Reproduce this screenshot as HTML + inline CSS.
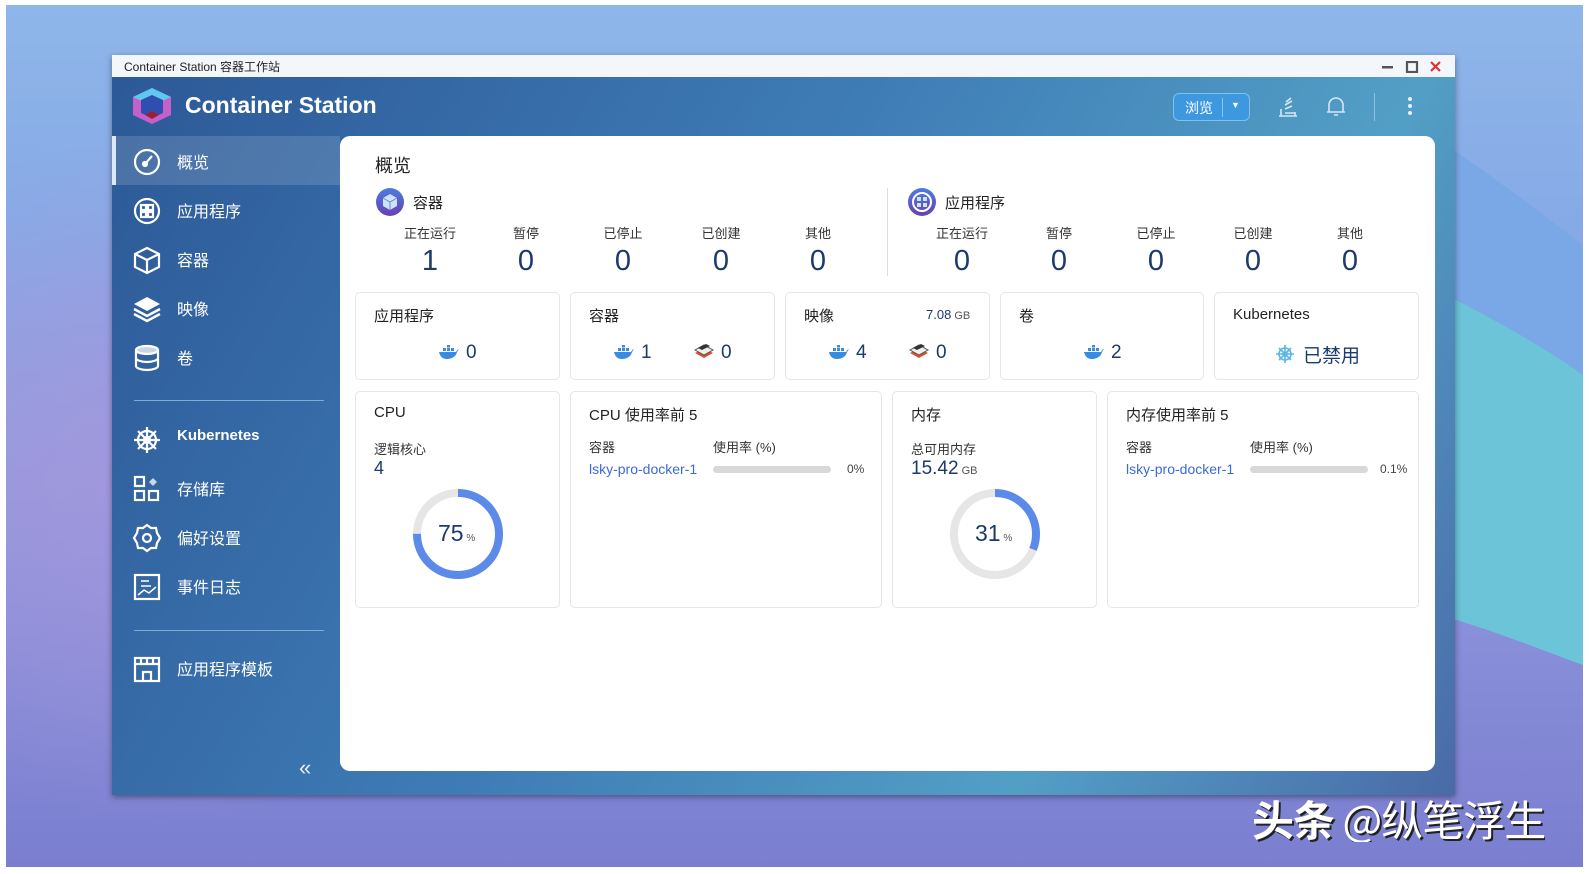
<!DOCTYPE html>
<html><head><meta charset="utf-8"><style>
*{margin:0;padding:0;box-sizing:border-box}
html{width:1589px;height:874px;overflow:hidden}
body{width:1589px;height:874px;overflow:hidden;background:#fff;font-family:"Liberation Sans","Noto Sans CJK SC",sans-serif;position:relative}
.a{position:absolute}
.wall{left:6px;top:5px;width:1577px;height:862px;background:linear-gradient(180deg,#8fb6ea 0%,#86aae6 25%,#929ade 55%,#7b7ed0 100%);overflow:hidden}
.win{left:112px;top:55px;width:1343px;height:740px;box-shadow:0 2px 6px rgba(0,0,0,.4);background:linear-gradient(120deg,#2c5896 0%,#3f7db6 45%,#529fc6 75%,#4a6aa8 100%)}
.tb{left:0;top:0;width:1343px;height:22px;background:#f3f6fb;font-size:12px;color:#222;padding:3px 12px}
.side{color:#fff;font-size:16px}
.mi{left:0;width:228px;height:49px}
.mi span{position:absolute;left:65px;top:13px}
.mi svg{position:absolute;left:20px;top:11px}
.card{background:#fff;border:1px solid #e3e6ea;border-radius:5px}
.t{font-size:15px;color:#222}
.lab{font-size:13px;color:#333;width:100px;text-align:center}
.num{font-size:29px;color:#1b3a6e;width:100px;text-align:center;line-height:34px}
.n2{font-size:19px;color:#1b3a6e}
</style></head><body>
<div class="a wall">
<div class="a" style="left:-200px;top:120px;width:700px;height:700px;border-radius:50%;background:radial-gradient(closest-side,rgba(170,150,220,.7),rgba(170,150,220,0))"></div>
<svg class="a" style="left:0;top:0" width="1577" height="862"><path d="M1440 290 C1500 320 1550 350 1577 370 L1577 660 C1510 635 1470 620 1440 612Z" fill="#6cc4d8"/><path d="M1440 140 C1500 180 1550 220 1577 240 L1577 370 C1550 350 1500 320 1440 290Z" fill="#7aa8e6"/></svg>
</div>
<div class="a win">
<div class="a tb">Container Station 容器工作站</div>
<svg class="a" style="left:1268px;top:6px" width="70" height="12"><rect x="2" y="5" width="11" height="2.5" fill="#555"/><rect x="27" y="1" width="10" height="10" fill="none" stroke="#555" stroke-width="2.2"/><path d="M51 1l9 9M60 1l-9 9" stroke="#d33" stroke-width="2.2"/></svg>
<svg class="a" style="left:19px;top:31px" width="42" height="40"><path d="M21 2L40 11V29L21 38L2 29V11Z" fill="#c65fc9"/><path d="M21 2L40 11L21 20L2 11Z" fill="#5ec8ef"/><path d="M10 14L21 9L32 14V27L21 32L10 27Z" fill="#2e4fb0"/><path d="M14 29L21 25L28 29L21 33Z" fill="#9b2030"/></svg>
<div class="a" style="left:73px;top:37px;font-size:23px;font-weight:bold;color:#fff">Container Station</div>
<div class="a" style="left:1061px;top:38px;width:77px;height:28px;border:1px solid #7fc0f0;border-radius:6px;background:#3e98e0;color:#fff;font-size:14px;padding:4px 11px">浏览<span class="a" style="left:48px;top:4px;width:1px;height:19px;background:#8cc6f0"></span><span class="a" style="left:57px;top:6px;font-size:9px">▼</span></div>
<svg class="a" style="left:1164px;top:40px" width="24" height="24" fill="none" stroke="#d6e6f3" stroke-width="1.6"><path d="M3 21H21M5 21V14M19 21V17M9 18H19M9 14L16 11M9 10L16 6M10 7L15 3"/></svg>
<svg class="a" style="left:1212px;top:40px" width="24" height="24" fill="none" stroke="#d6e6f3" stroke-width="1.6"><path d="M5 17V10a7 7 0 0 1 14 0v7H5zM3 17H21M10 20h4"/></svg>
<div class="a" style="left:1262px;top:38px;width:1px;height:28px;background:#8fc0df"></div>
<svg class="a" style="left:1295px;top:41px" width="6" height="22" fill="#e6eef6"><circle cx="3" cy="3" r="2"/><circle cx="3" cy="10" r="2"/><circle cx="3" cy="17" r="2"/></svg>
<div class="side">
<div class="a mi" style="top:81px;background:rgba(255,255,255,.14)"><div class="a" style="left:0;top:0;width:4px;height:49px;background:#dde8f5"></div><svg width="30" height="30" fill="none" stroke="#fff" stroke-width="2.2"><circle cx="15" cy="15" r="12"/><path d="M13 17L20 9"/><circle cx="13" cy="17" r="2" fill="#fff"/></svg><span>概览</span></div>
<div class="a mi" style="top:130px"><svg width="30" height="30" fill="none" stroke="#fff" stroke-width="2.2"><circle cx="15" cy="15" r="12"/><rect x="9" y="9" width="5" height="5"/><rect x="16" y="9" width="5" height="5"/><rect x="9" y="16" width="5" height="5"/><rect x="16" y="16" width="5" height="5"/></svg><span>应用程序</span></div>
<div class="a mi" style="top:179px"><svg width="30" height="30" fill="none" stroke="#fff" stroke-width="2.2"><path d="M15 3L27 9V22L15 28L3 22V9Z M3 9L15 15L27 9M15 15V28"/></svg><span>容器</span></div>
<div class="a mi" style="top:228px"><svg width="30" height="30" fill="#fff"><path d="M15 3L28 10L15 17L2 10Z"/><path d="M2 15L15 22L28 15" fill="none" stroke="#fff" stroke-width="2.5"/><path d="M2 20L15 27L28 20" fill="none" stroke="#fff" stroke-width="2.5"/></svg><span>映像</span></div>
<div class="a mi" style="top:277px"><svg width="30" height="30" fill="none" stroke="#fff" stroke-width="2.2"><ellipse cx="15" cy="7" rx="11" ry="4" fill="#c9d6e6"/><path d="M4 7V23c0 2 5 4 11 4s11-2 11-4V7M4 15c0 2 5 4 11 4s11-2 11-4"/></svg><span>卷</span></div>
<div class="a" style="left:22px;top:345px;width:190px;height:1px;background:#7faed4"></div>
<div class="a mi" style="top:359px"><svg width="30" height="30" fill="none" stroke="#fff" stroke-width="2.2"><circle cx="15" cy="15" r="9"/><circle cx="15" cy="15" r="3" fill="#fff"/><path d="M15 2V28M2 15H28M6 6L24 24M24 6L6 24"/></svg><span style="font-weight:bold;font-size:15px">Kubernetes</span></div>
<div class="a mi" style="top:408px"><svg width="30" height="30" fill="none" stroke="#fff" stroke-width="2.2"><rect x="3" y="3" width="9" height="9"/><rect x="3" y="17" width="9" height="9"/><rect x="17" y="17" width="9" height="9"/><path d="M17 8l4-4 4 4-4 4z" fill="#c9d6e6" stroke="none"/></svg><span>存储库</span></div>
<div class="a mi" style="top:457px"><svg width="30" height="30" fill="none" stroke="#fff" stroke-width="2.2"><path d="M15 2l4 3 5 0 1 5 3 5-3 5-1 5-5 0-4 3-4-3-5 0-1-5-3-5 3-5 1-5 5 0z"/><circle cx="15" cy="15" r="4"/></svg><span>偏好设置</span></div>
<div class="a mi" style="top:506px"><svg width="30" height="30" fill="none" stroke="#fff" stroke-width="2.2"><rect x="3" y="3" width="24" height="24"/><path d="M9 9h8M9 14h10M6 23l6-5 5 3 7-6" stroke-width="1.5"/></svg><span>事件日志</span></div>
<div class="a" style="left:22px;top:575px;width:190px;height:1px;background:#7faed4"></div>
<div class="a mi" style="top:588px"><svg width="30" height="30" fill="none" stroke="#fff" stroke-width="2.2"><rect x="3" y="4" width="24" height="23"/><path d="M3 10h24M9 4v7M15 4v7M21 4v7M11 27v-9h8v9"/></svg><span>应用程序模板</span></div>
<div class="a" style="left:187px;top:700px;font-size:22px;line-height:26px;color:#e6eef6">«</div>
</div>
<div class="a" style="left:228px;top:81px;width:1095px;height:635px;background:#fff;border-radius:10px"></div>
</div>
<div class="a" style="left:375px;top:152px;font-size:18px;color:#222">概览</div>
<svg class="a" style="left:375px;top:187px" width="30" height="30"><defs><linearGradient id="g" x1="0" y1="0" x2="0" y2="1"><stop offset="0" stop-color="#4a7ee0"/><stop offset="1" stop-color="#6a3fb0"/></linearGradient></defs><circle cx="15" cy="15" r="14" fill="url(#g)"/><path d="M15 7l7 4v8l-7 4-7-4v-8z" fill="#cfe3ff"/><path d="M8 11l7 4 7-4M15 15v8" stroke="#6a8ad0" fill="none"/></svg>
<div class="a t" style="left:413px;top:192px">容器</div>
<svg class="a" style="left:907px;top:187px" width="30" height="30"><circle cx="15" cy="15" r="14" fill="url(#g)"/><circle cx="15" cy="15" r="9" fill="none" stroke="#fff" stroke-width="2"/><rect x="10" y="10" width="4" height="4" fill="#cfe3ff"/><rect x="16" y="10" width="4" height="4" fill="#cfe3ff"/><rect x="10" y="16" width="4" height="4" fill="#cfe3ff"/><rect x="16" y="16" width="4" height="4" fill="#cfe3ff"/></svg>
<div class="a t" style="left:945px;top:192px">应用程序</div>
<div class="a" style="left:887px;top:188px;width:1px;height:88px;background:#ddd"></div>

<div class="a lab" style="left:380px;top:223px">正在运行</div><div class="a num" style="left:380px;top:244px">1</div>
<div class="a lab" style="left:476px;top:223px">暂停</div><div class="a num" style="left:476px;top:244px">0</div>
<div class="a lab" style="left:573px;top:223px">已停止</div><div class="a num" style="left:573px;top:244px">0</div>
<div class="a lab" style="left:671px;top:223px">已创建</div><div class="a num" style="left:671px;top:244px">0</div>
<div class="a lab" style="left:768px;top:223px">其他</div><div class="a num" style="left:768px;top:244px">0</div>
<div class="a lab" style="left:912px;top:223px">正在运行</div><div class="a num" style="left:912px;top:244px">0</div>
<div class="a lab" style="left:1009px;top:223px">暂停</div><div class="a num" style="left:1009px;top:244px">0</div>
<div class="a lab" style="left:1106px;top:223px">已停止</div><div class="a num" style="left:1106px;top:244px">0</div>
<div class="a lab" style="left:1203px;top:223px">已创建</div><div class="a num" style="left:1203px;top:244px">0</div>
<div class="a lab" style="left:1300px;top:223px">其他</div><div class="a num" style="left:1300px;top:244px">0</div>

<svg width="0" height="0" style="position:absolute;left:0;top:0"><defs><symbol id="wh" viewBox="0 0 22 14"><path d="M1 7h17c1-2 2-3 3-3-1 1-1 2-2 3-1 5-6 7-10 7-5 0-7-3-8-7z" fill="#3a8be0"/><rect x="5" y="3" width="3" height="3" fill="#3a8be0"/><rect x="9" y="3" width="3" height="3" fill="#3a8be0"/><rect x="9" y="0" width="3" height="2.5" fill="#3a8be0"/><rect x="13" y="3" width="3" height="3" fill="#3a8be0"/></symbol><symbol id="lx" viewBox="0 0 22 18"><path d="M2 11l9 5 9-5-9-5z" fill="#d9502e"/><path d="M2 8l9 5 9-5-9-5z" fill="#eee" stroke="#555"/><path d="M5 6l8-4 4 2-8 4z" fill="#333"/></symbol></defs></svg>

<div class="a card" style="left:355px;top:292px;width:205px;height:88px"><div class="a t" style="left:18px;top:12px">应用程序</div><svg class="a" style="left:82px;top:52px" width="22" height="14"><use href="#wh"/></svg><div class="a n2" style="left:110px;top:49px">0</div></div>
<div class="a card" style="left:570px;top:292px;width:205px;height:88px"><div class="a t" style="left:18px;top:12px">容器</div><svg class="a" style="left:42px;top:52px" width="22" height="14"><use href="#wh"/></svg><div class="a n2" style="left:70px;top:49px">1</div><svg class="a" style="left:122px;top:49px" width="22" height="18"><use href="#lx"/></svg><div class="a n2" style="left:150px;top:49px">0</div></div>
<div class="a card" style="left:785px;top:292px;width:205px;height:88px"><div class="a t" style="left:18px;top:12px">映像</div><div class="a" style="left:140px;top:14px;font-size:13px;color:#1b3a6e">7.08<span style="font-size:11px;color:#555"> GB</span></div><svg class="a" style="left:42px;top:52px" width="22" height="14"><use href="#wh"/></svg><div class="a n2" style="left:70px;top:49px">4</div><svg class="a" style="left:122px;top:49px" width="22" height="18"><use href="#lx"/></svg><div class="a n2" style="left:150px;top:49px">0</div></div>
<div class="a card" style="left:1000px;top:292px;width:204px;height:88px"><div class="a t" style="left:18px;top:12px">卷</div><svg class="a" style="left:82px;top:52px" width="22" height="14"><use href="#wh"/></svg><div class="a n2" style="left:110px;top:49px">2</div></div>
<div class="a card" style="left:1214px;top:292px;width:205px;height:88px"><div class="a t" style="left:18px;top:13px">Kubernetes</div><svg class="a" style="left:60px;top:51px" width="20" height="20" fill="none" stroke="#5bb6e6" stroke-width="1.6"><circle cx="10" cy="10" r="6"/><circle cx="10" cy="10" r="2"/><path d="M10 1v18M1 10h18M4 4l12 12M16 4L4 16"/></svg><div class="a" style="left:88px;top:48px;font-size:19px;color:#1b3a6e">已禁用</div></div>

<div class="a card" style="left:355px;top:391px;width:205px;height:217px"><div class="a t" style="left:18px;top:12px">CPU</div><div class="a" style="left:18px;top:47px;font-size:13px;color:#333">逻辑核心</div><div class="a" style="left:18px;top:66px;font-size:18px;color:#1b3a6e">4</div>
<svg class="a" style="left:55px;top:95px" width="94" height="94"><circle cx="47" cy="47" r="41" fill="none" stroke="#e6e6e6" stroke-width="8"/><circle cx="47" cy="47" r="41" fill="none" stroke="#5b8ae8" stroke-width="8" stroke-dasharray="193 258" transform="rotate(-90 47 47)"/></svg>
<div class="a" style="left:82px;top:128px;font-size:23px;color:#1b3a6e">75<span style="font-size:10px;color:#555"> %</span></div></div>
<div class="a card" style="left:570px;top:391px;width:312px;height:217px"><div class="a t" style="left:18px;top:12px">CPU 使用率前 5</div><div class="a" style="left:18px;top:45px;font-size:13px;color:#333">容器</div><div class="a" style="left:142px;top:45px;font-size:13px;color:#333">使用率 (%)</div><div class="a" style="left:18px;top:69px;font-size:14px;color:#3a6ad6">lsky-pro-docker-1</div><div class="a" style="left:142px;top:74px;width:118px;height:7px;border-radius:4px;background:#d8d8d8"></div><div class="a" style="left:276px;top:70px;font-size:12px;color:#444">0%</div></div>
<div class="a card" style="left:892px;top:391px;width:205px;height:217px"><div class="a t" style="left:18px;top:12px">内存</div><div class="a" style="left:18px;top:47px;font-size:13px;color:#333">总可用内存</div><div class="a" style="left:18px;top:66px;font-size:19px;color:#1b3a6e">15.42<span style="font-size:11px;color:#555"> GB</span></div>
<svg class="a" style="left:55px;top:95px" width="94" height="94"><circle cx="47" cy="47" r="41" fill="none" stroke="#e6e6e6" stroke-width="8"/><circle cx="47" cy="47" r="41" fill="none" stroke="#5b8ae8" stroke-width="8" stroke-dasharray="80 258" transform="rotate(-90 47 47)"/></svg>
<div class="a" style="left:82px;top:128px;font-size:23px;color:#1b3a6e">31<span style="font-size:10px;color:#555"> %</span></div></div>
<div class="a card" style="left:1107px;top:391px;width:312px;height:217px"><div class="a t" style="left:18px;top:12px">内存使用率前 5</div><div class="a" style="left:18px;top:45px;font-size:13px;color:#333">容器</div><div class="a" style="left:142px;top:45px;font-size:13px;color:#333">使用率 (%)</div><div class="a" style="left:18px;top:69px;font-size:14px;color:#3a6ad6">lsky-pro-docker-1</div><div class="a" style="left:142px;top:74px;width:118px;height:7px;border-radius:4px;background:#d8d8d8"></div><div class="a" style="left:272px;top:70px;font-size:12px;color:#444">0.1%</div></div>

<div class="a" style="left:1252px;top:796px;height:46px;line-height:46px;font-size:42px;font-weight:bold;color:#fff;text-shadow:2px 2px 0 #222;font-family:'Noto Sans CJK SC',sans-serif;letter-spacing:-1px;white-space:nowrap;overflow:hidden">头条 <span style="font-weight:normal">@纵笔浮生</span></div>
</body></html>
